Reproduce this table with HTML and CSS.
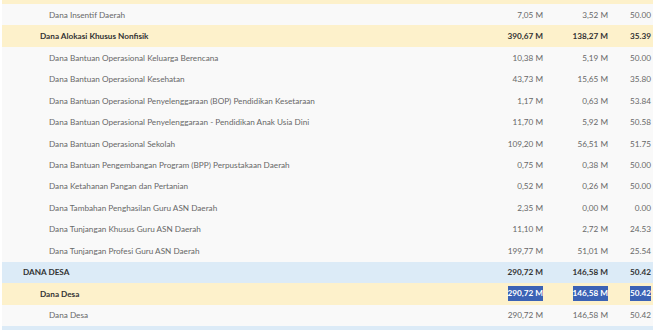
FILE: index.html
```html
<!DOCTYPE html>
<html>
<head>
<meta charset="utf-8">
<link rel="stylesheet" href="styles.css">
</head>
<body>
<div class="viewport">
  <div class="table">
    <div class="row sub bold"><div class="name l2">Dana Insentif Fiskal</div><div class="num">7,05 M</div><div class="num">3,52 M</div><div class="num">50.00</div></div>
    <div class="row item"><div class="name l3">Dana Insentif Daerah</div><div class="num">7,05 M</div><div class="num">3,52 M</div><div class="num">50.00</div></div>
    <div class="row sub bold"><div class="name l2">Dana Alokasi Khusus Nonfisik</div><div class="num">390,67 M</div><div class="num">138,27 M</div><div class="num">35.39</div></div>
    <div class="row item"><div class="name l3">Dana Bantuan Operasional Keluarga Berencana</div><div class="num">10,38 M</div><div class="num">5,19 M</div><div class="num">50.00</div></div>
    <div class="row item"><div class="name l3">Dana Bantuan Operasional Kesehatan</div><div class="num">43,73 M</div><div class="num">15,65 M</div><div class="num">35.80</div></div>
    <div class="row item"><div class="name l3">Dana Bantuan Operasional Penyelenggaraan (BOP) Pendidikan Kesetaraan</div><div class="num">1,17 M</div><div class="num">0,63 M</div><div class="num">53.84</div></div>
    <div class="row item"><div class="name l3">Dana Bantuan Operasional Penyelenggaraan - Pendidikan Anak Usia Dini</div><div class="num">11,70 M</div><div class="num">5,92 M</div><div class="num">50.58</div></div>
    <div class="row item"><div class="name l3">Dana Bantuan Operasional Sekolah</div><div class="num">109,20 M</div><div class="num">56,51 M</div><div class="num">51.75</div></div>
    <div class="row item"><div class="name l3">Dana Bantuan Pengembangan Program (BPP) Perpustakaan Daerah</div><div class="num">0,75 M</div><div class="num">0,38 M</div><div class="num">50.00</div></div>
    <div class="row item"><div class="name l3">Dana Ketahanan Pangan dan Pertanian</div><div class="num">0,52 M</div><div class="num">0,26 M</div><div class="num">50.00</div></div>
    <div class="row item"><div class="name l3">Dana Tambahan Penghasilan Guru ASN Daerah</div><div class="num">2,35 M</div><div class="num">0,00 M</div><div class="num">0.00</div></div>
    <div class="row item"><div class="name l3">Dana Tunjangan Khusus Guru ASN Daerah</div><div class="num">11,10 M</div><div class="num">2,72 M</div><div class="num">24.53</div></div>
    <div class="row item"><div class="name l3">Dana Tunjangan Profesi Guru ASN Daerah</div><div class="num">199,77 M</div><div class="num">51,01 M</div><div class="num">25.54</div></div>
    <div class="row top bold"><div class="name l1">DANA DESA</div><div class="num">290,72 M</div><div class="num">146,58 M</div><div class="num">50.42</div></div>
    <div class="row sub bold"><div class="name l2">Dana Desa</div><div class="num"><span class="sel">290,72 M</span></div><div class="num"><span class="sel">146,58 M</span></div><div class="num"><span class="sel">50.42</span></div></div>
    <div class="row item"><div class="name l3">Dana Desa</div><div class="num">290,72 M</div><div class="num">146,58 M</div><div class="num">50.42</div></div>
    <div class="row top bold"><div class="name l1">DANA LAINNYA</div><div class="num">120,00 M</div><div class="num">60,00 M</div><div class="num">50.00</div></div>
  </div>
</div>
</body>
</html>
```

FILE: styles.css
```css
html, body {
  margin: 0;
  padding: 0;
  background: #ffffff;
}
.viewport {
  width: 660px;
  height: 330px;
  overflow: hidden;
}
.table {
  margin: -17.5px 0 0 2px;
  width: 651px;
  font-family: "Lato", "Open Sans", sans-serif;
  font-size: 8.2px;
  color: #686868;
}
.row {
  display: grid;
  grid-template-columns: 1fr 80px 65px 43px;
  height: 21.47px;
  align-items: center;
  padding-right: 2px;
  box-sizing: border-box;
}
.item { background: #f9f9f9; }
.sub { background: #fdf1cb; }
.top { background: #dcebf7; }
.bold { font-weight: 700; color: #333333; }
.name { white-space: nowrap; overflow: hidden; }
.l1 { padding-left: 21px; }
.l2 { padding-left: 38px; }
.l3 { padding-left: 47px; }
.num { text-align: right; white-space: nowrap; }
.sel {
  background: #3b62b5;
  color: #ffffff;
  display: inline-block;
  line-height: 15px;
}
```
